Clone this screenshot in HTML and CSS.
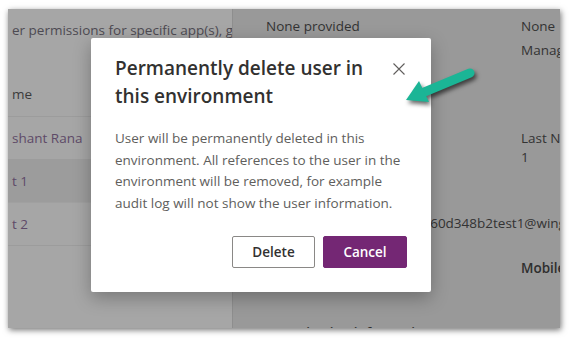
FILE: index.html
```html
<!DOCTYPE html>
<html lang="en">
<head>
    <meta charset="UTF-8">
    <title>Delete user</title>
    <link rel="stylesheet" href="styles.css">
</head>
<body>
    <div class="frame">
        <div class="list-pane">
            <div class="hint">er permissions for specific app(s), go to Settings</div>
            <div class="list-head">me</div>
            <div class="list-row">shant Rana</div>
            <div class="list-row selected">t 1</div>
            <div class="list-row">t 2</div>
        </div>

        <div class="detail-pane">
            <div class="detail-row first">
                <span class="col-a">None provided</span>
                <span class="col-b">None</span>
            </div>
            <div class="detail-row">
                <span class="col-a"></span>
                <span class="col-b">Manager</span>
            </div>
            <div class="detail-row gap-lg">
                <span class="col-a"></span>
                <span class="col-b">Last Name</span>
            </div>
            <div class="detail-row tight">
                <span class="col-a"></span>
                <span class="col-b">1</span>
            </div>
            <div class="detail-row email">4e1b7c2f9960d348b2test1@wingtip.onmicrosoft.com</div>
            <div class="detail-row gap-md">
                <span class="col-a"></span>
                <span class="col-b label">Mobile phone</span>
            </div>
            <div class="detail-row section">
                <span class="col-a label">Organization information</span>
                <span class="col-b label">Manager</span>
            </div>
        </div>

        <div class="dialog">
            <div class="dialog-head">
                <h2>Permanently delete user in this environment</h2>
                <button class="close" aria-label="Close">
                    <svg width="12" height="12" viewBox="0 0 12 12">
                        <path d="M0.5 0.5 L11.5 11.5 M11.5 0.5 L0.5 11.5" stroke="#605e5c" stroke-width="1.1" fill="none"/>
                    </svg>
                </button>
            </div>
            <p class="dialog-text">User will be permanently deleted in this environment. All references to the user in the environment will be removed, for example audit log will not show the user information.</p>
            <div class="dialog-actions">
                <button class="btn">Delete</button>
                <button class="btn primary">Cancel</button>
            </div>
        </div>

        <svg class="arrow" width="80" height="50" viewBox="0 0 80 50">
            <line x1="70" y1="13" x2="22" y2="33" stroke="#1bb596" stroke-width="9" stroke-linecap="round"/>
            <polygon points="6,40 19,21 29,42" fill="#1bb596"/>
        </svg>
    </div>
</body>
</html>
```

FILE: styles.css
```css
* {
    box-sizing: border-box;
    margin: 0;
    padding: 0;
}
body {
    background: #fff;
    padding: 9px 9px 10px 8px;
    font-family: 'Open Sans', 'Noto Sans', sans-serif;
}
.frame {
    position: relative;
    display: flex;
    width: 552px;
    height: 319px;
    overflow: hidden;
    box-shadow: 1px 2px 6px rgba(0, 0, 0, 0.55);
}
.list-pane {
    width: 225px;
    background: #a6a6a6;
    border-right: 1px solid #8e8e8e;
    overflow: hidden;
    white-space: nowrap;
    font-size: 13.5px;
}
.hint {
    color: #4d4a52;
    padding: 12px 0 0 4px;
    height: 73px;
}
.list-head {
    color: #3b3b3b;
    height: 35px;
    padding: 3px 0 0 4px;
    border-bottom: 1px solid #9c9c9c;
}
.list-row {
    height: 43px;
    line-height: 42px;
    padding-left: 4px;
    color: #5e4a68;
    border-bottom: 1px solid #9c9c9c;
}
.list-row.selected {
    background: #9c9c9c;
    border-bottom-color: #a0a0a0;
}
.detail-pane {
    flex: 1;
    background: #999;
    overflow: hidden;
    white-space: nowrap;
    font-size: 13.5px;
    color: #333;
}
.detail-row {
    display: flex;
    height: 24px;
    line-height: 24px;
}
.detail-row.first {
    margin-top: 5px;
}
.detail-row.gap-lg {
    margin-top: 64px;
}
.detail-row.tight {
    height: 19px;
    line-height: 14px;
}
.detail-row.email {
    margin-top: 42px;
    padding-left: 124px;
}
.detail-row.gap-md {
    margin-top: 21px;
}
.detail-row.section {
    margin-top: 41px;
}
.col-a {
    width: 288px;
    padding-left: 33px;
    flex-shrink: 0;
}
.col-b {
    flex-shrink: 0;
}
.label {
    font-weight: 600;
    color: #2e2e2e;
}
.dialog {
    position: absolute;
    left: 83px;
    top: 29px;
    width: 340px;
    background: #fff;
    border-radius: 2px;
    box-shadow: 0 6px 18px rgba(0, 0, 0, 0.28);
    padding: 16px 24px 24px;
}
.dialog-head {
    display: flex;
    justify-content: space-between;
    align-items: flex-start;
}
.dialog-head h2 {
    font-size: 19px;
    font-weight: 600;
    line-height: 28px;
    color: #323130;
    width: 260px;
}
.close {
    background: none;
    border: none;
    margin: 9px 2px 0 0;
    width: 12px;
    height: 12px;
    display: flex;
}
.dialog-text {
    margin-top: 18px;
    font-size: 13.5px;
    line-height: 21.6px;
    color: #605e5c;
}
.dialog-actions {
    display: flex;
    justify-content: flex-end;
    gap: 8px;
    margin-top: 22px;
}
.btn {
    height: 32px;
    width: 83px;
    border: 1px solid #8a8886;
    border-radius: 2px;
    background: #fff;
    color: #323130;
    font-family: inherit;
    font-size: 13.5px;
    font-weight: 600;
}
.btn.primary {
    width: 84px;
    background: #742774;
    border-color: #742774;
    color: #fff;
}
.arrow {
    position: absolute;
    left: 392px;
    top: 51px;
    filter: drop-shadow(2px 3px 2px rgba(0, 0, 0, 0.6));
}
```
